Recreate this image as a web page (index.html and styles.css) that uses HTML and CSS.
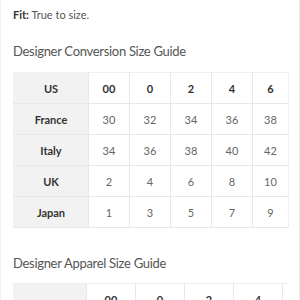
FILE: index.html
```html
<!DOCTYPE html>
<html lang="en">
<head>
    <meta charset="UTF-8">
    <meta name="viewport" content="width=device-width, initial-scale=1.0">
    <title>Size Guide</title>
    <link rel="stylesheet" href="styles.css">
</head>
<body>

    <div class="panel">
        <p class="fit"><b>Fit:</b> True to size.</p>

        <h3 class="guide-title">Designer Conversion Size Guide</h3>
        <div class="table-wrap">
            <table class="size-table conversion">
                <tr class="head">
                    <th>US</th><td>00</td><td>0</td><td>2</td><td>4</td><td>6</td>
                </tr>
                <tr><th>France</th><td>30</td><td>32</td><td>34</td><td>36</td><td>38</td></tr>
                <tr><th>Italy</th><td>34</td><td>36</td><td>38</td><td>40</td><td>42</td></tr>
                <tr><th>UK</th><td>2</td><td>4</td><td>6</td><td>8</td><td>10</td></tr>
                <tr><th>Japan</th><td>1</td><td>3</td><td>5</td><td>7</td><td>9</td></tr>
            </table>
        </div>

        <h3 class="guide-title second">Designer Apparel Size Guide</h3>
        <div class="table-wrap">
            <table class="size-table apparel">
                <tr class="head">
                    <th></th><td>00</td><td>0</td><td>2</td><td>4</td><td>6</td>
                </tr>
                <tr><th>Bust</th><td>31</td><td>32</td><td>33</td><td>34</td><td>35</td></tr>
            </table>
        </div>
    </div>

</body>
</html>
```

FILE: styles.css
```css
body {
    margin: 0;
    background: #fff;
    font-family: Lato, "Open Sans", sans-serif;
    color: #555;
}

.panel {
    width: 276px;
    padding: 0 10px 0 12px;
    border-left: 1px solid #f2f2f2;
    border-right: 1px solid #ececec;
    margin-right: 1px;
}

.fit {
    margin: 0;
    padding-top: 8px;
    font-size: 11px;
    line-height: 14px;
    color: #555;
}

.fit b {
    color: #333;
    font-weight: 700;
}

.guide-title {
    margin: 21px 0 13px;
    font-size: 13px;
    font-weight: 400;
    line-height: 16px;
    letter-spacing: -0.3px;
    color: #555;
}

.guide-title.second {
    margin: 27px 0 12px;
}

.table-wrap {
    width: 276px;
    overflow: hidden;
}

.size-table {
    border-collapse: collapse;
    table-layout: fixed;
    font-size: 11px;
}

.size-table th,
.size-table td {
    border: 1px solid #e8e8e8;
    height: 30px;
    padding: 0;
    text-align: center;
}

.size-table th {
    width: 74px;
    background: #f2f2f2;
    color: #333;
    font-weight: 700;
}

.size-table td {
    color: #666;
}

.size-table .head td {
    color: #333;
    font-weight: 700;
}

.size-table tr:first-child th,
.size-table tr:first-child td {
    border-top-color: #f0f0f0;
}

.size-table th:first-child {
    border-left-color: #f2f2f2;
}

.conversion td { width: 40px; }
.conversion td:last-child { width: 35px; border-right-color: #f0f0f0; }

.apparel { width: 314px; }
.apparel th { width: 72px; }
.apparel td { width: 48px; }
```
